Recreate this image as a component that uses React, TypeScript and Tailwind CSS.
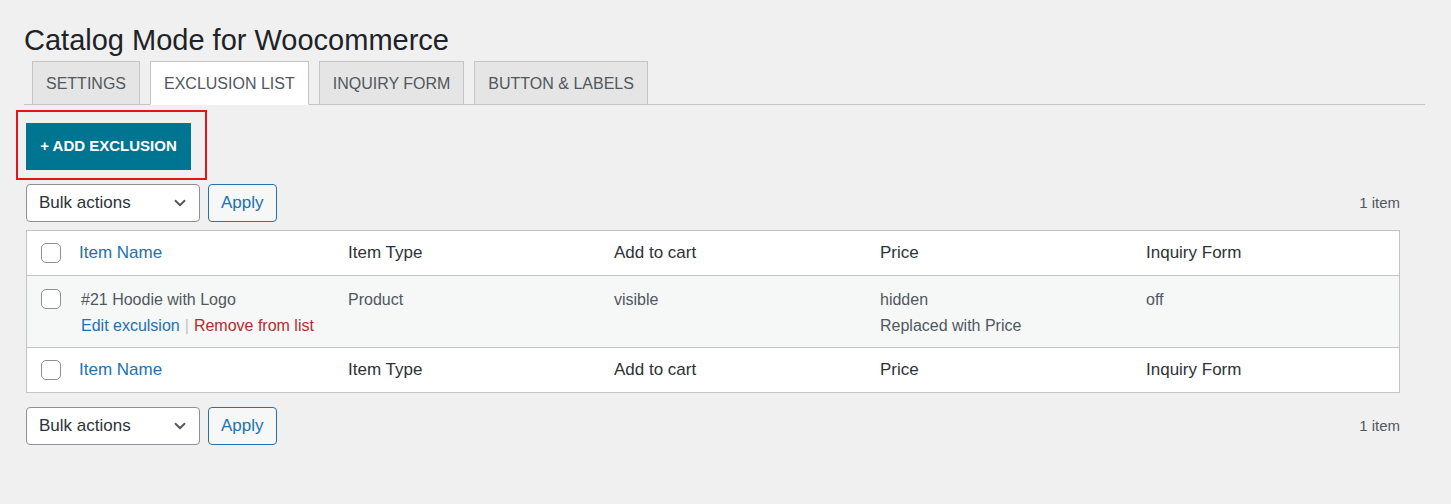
import { ChevronDown } from 'lucide-react';

const font = { fontFamily: '"Liberation Sans", Arial, sans-serif' };

function Tab({ label, active }: { label: string; active?: boolean }) {
  return (
    <div
      className={
        'h-[44px] px-[13px] pt-[2px] flex items-center border border-[#c3c4c7] text-[16px] uppercase text-[#50575e] -mb-px ' +
        (active ? 'bg-white border-b-white text-[#1d2327]' : 'bg-[#e5e5e5]')
      }
    >
      {label}
    </div>
  );
}

function Checkbox() {
  return <div className="w-[20px] h-[20px] rounded-[5px] border border-[#8c8f94] bg-white shrink-0" />;
}

function BulkBar() {
  return (
    <div className="flex items-center justify-between pr-[25px]">
      <div className="flex items-center gap-[8px]">
        <div className="w-[174px] h-[38px] bg-white border border-[#8c8f94] rounded-[4px] flex items-center justify-between pl-[12px] pr-[10px] text-[17px] text-[#2c3338]">
          <span>Bulk actions</span>
          <ChevronDown size={18} strokeWidth={2.5} className="text-[#50575e]" />
        </div>
        <div className="h-[38px] px-[12px] flex items-center border border-[#2271b1] rounded-[4px] bg-[#f6f7f7] text-[#2271b1] text-[17px]">
          Apply
        </div>
      </div>
      <span className="text-[15px] text-[#50575e]">1 item</span>
    </div>
  );
}

function HeadRow({ last }: { last?: boolean }) {
  return (
    <div
      className={
        'h-[45px] flex items-center text-[17px] text-[#2c3338] ' + (last ? 'border-t border-[#c3c4c7]' : 'border-b border-[#c3c4c7]')
      }
    >
      <div className="w-[52px] pl-[14px]">
        <Checkbox />
      </div>
      <div className="w-[269px] text-[#2271b1]">Item Name</div>
      <div className="w-[266px]">Item Type</div>
      <div className="w-[266px]">Add to cart</div>
      <div className="w-[266px]">Price</div>
      <div>Inquiry Form</div>
    </div>
  );
}

export default function App() {
  return (
    <div className="min-h-screen bg-[#f0f0f1] pt-[22px] pl-[24px] pr-[26px]" style={font}>
      <h1 className="text-[29px] leading-[36px] text-[#1d2327]">Catalog Mode for Woocommerce</h1>
      <div className="mt-[3px] flex gap-[10px] pl-[8px] border-b border-[#c3c4c7]">
        <Tab label="Settings" />
        <Tab label="Exclusion List" active />
        <Tab label="Inquiry Form" />
        <Tab label="Button & Labels" />
      </div>
      <div className="pl-[2px]">
        <div className="mt-[5px] -ml-[10px] w-[191px] h-[70px] border-2 border-[#e3141a] pt-[11px] pl-[8px]">
          <div className="h-[47px] w-[165px] bg-[#007591] text-white font-bold text-[15px] flex items-center justify-center">
            + ADD EXCLUSION
          </div>
        </div>
        <div className="mt-[4px]">
          <BulkBar />
        </div>
        <div className="mt-[8px] mr-[25px] bg-white border border-[#c3c4c7]">
          <HeadRow />
          <div className="h-[71px] bg-[#f6f7f7] flex pt-[12px] text-[16px] leading-[24px] text-[#50575e]">
            <div className="w-[52px] pl-[14px] pt-[1px]">
              <Checkbox />
            </div>
            <div className="w-[269px] pl-[2px]">
              <div>#21 Hoodie with Logo</div>
              <div className="mt-[2px] flex items-center">
                <span className="text-[#2271b1]">Edit exculsion</span>
                <span className="mx-[5px] text-[#c3c4c7]">|</span>
                <span className="text-[#b32d2e]">Remove from list</span>
              </div>
            </div>
            <div className="w-[266px]">Product</div>
            <div className="w-[266px]">visible</div>
            <div className="w-[266px]">
              <div>hidden</div>
              <div className="mt-[2px]">Replaced with Price</div>
            </div>
            <div>off</div>
          </div>
          <HeadRow last />
        </div>
        <div className="mt-[14px]">
          <BulkBar />
        </div>
      </div>
    </div>
  );
}
